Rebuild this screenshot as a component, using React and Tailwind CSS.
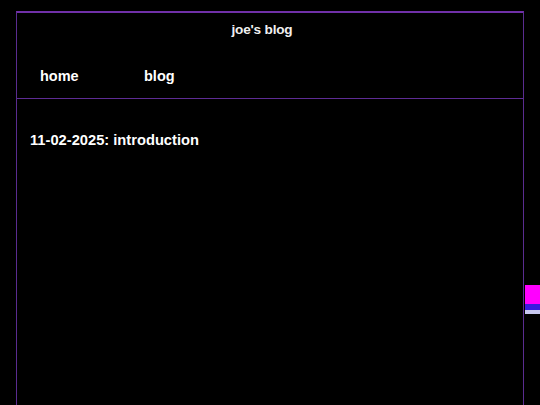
export default function App() {
  return (
    <div
      className="relative min-h-[405px] w-[540px] overflow-hidden bg-black text-white"
      style={{ fontFamily: '"Liberation Sans", Arial, sans-serif' }}
    >
      <div className="pt-[11px] px-[16px]">
        <div className="min-h-[394px] border-x border-t-2 border-x-[#5a2c90] border-t-[#7030a8]">
          <header className="h-[86px] border-b border-[#5e2c94]">
            <div className="flex justify-center pr-[16px] pt-[7px]">
              <h1 className="text-[13.6px] font-bold leading-[20px] tracking-[-0.2px] text-[#f0f0f0]">joe's blog</h1>
            </div>
            <nav className="flex pl-[23px] pt-[26px]">
              <a className="w-[104px] text-[14.5px] font-bold leading-[20px]">home</a>
              <a className="text-[14.5px] font-bold leading-[20px]">blog</a>
            </nav>
          </header>
          <main className="px-[13px] pt-[31px]">
            <h2 className="text-[14.7px] font-bold leading-[20px]">11-02-2025: introduction</h2>
          </main>
        </div>
      </div>
      <div className="absolute left-[525px] top-[285px] flex w-[15px] flex-col">
        <div className="h-[19px] bg-[#ff00ff]" />
        <div className="h-[6px] bg-[#3a1ae0]" />
        <div className="h-[4px] bg-[#c8c8f0]" />
      </div>
    </div>
  );
}
